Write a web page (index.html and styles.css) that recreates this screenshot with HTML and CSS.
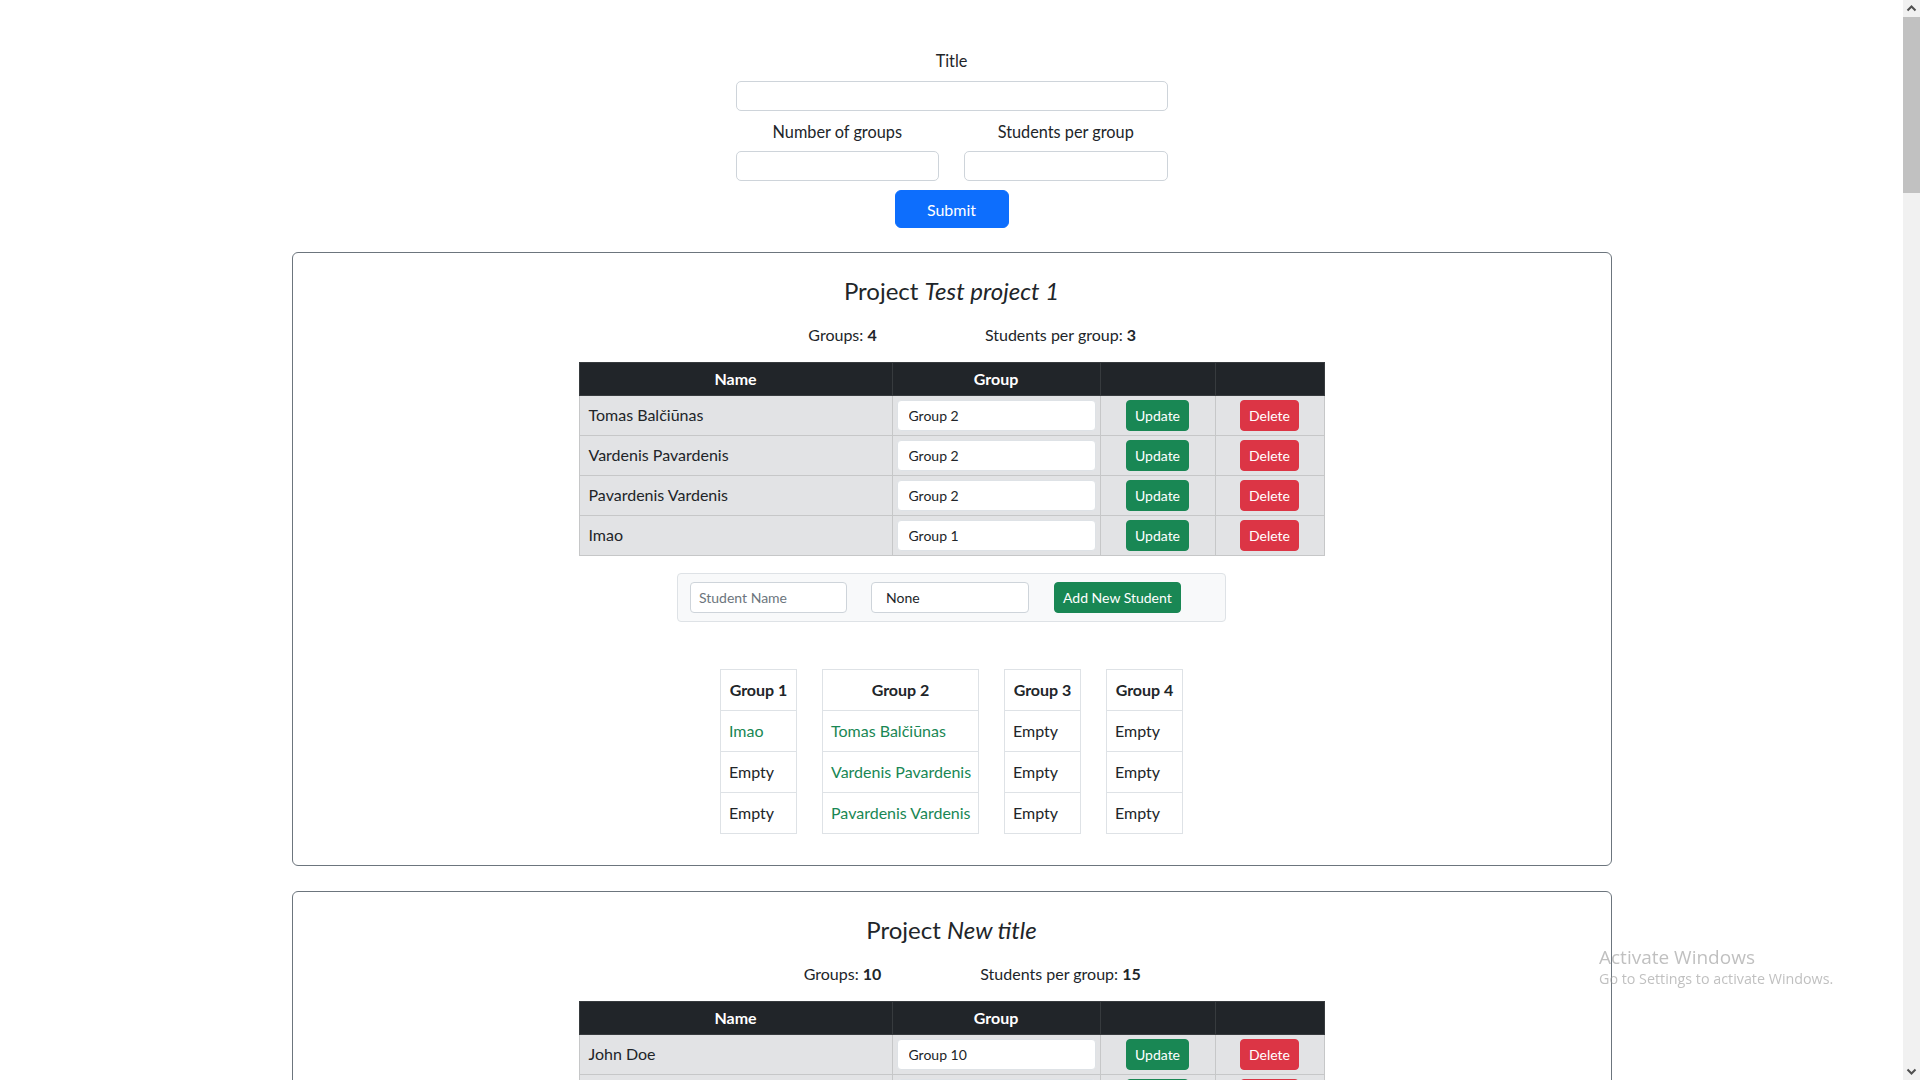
FILE: index.html
```html
<!DOCTYPE html>
<html lang="en">
<head>
<meta charset="utf-8">
<title>Projects</title>
<link rel="stylesheet" href="styles.css">
</head>
<body>
<div class="page">
  <main class="container">
    <form class="create-form">
      <label class="form-label">Title</label>
      <input class="form-input title-input" type="text">
      <div class="form-row">
        <div class="form-col">
          <label class="form-label row-label">Number of groups</label>
          <input class="form-input" type="text">
        </div>
        <div class="form-col">
          <label class="form-label row-label">Students per group</label>
          <input class="form-input" type="text">
        </div>
      </div>
      <button type="button" class="btn btn-primary btn-submit">Submit</button>
    </form>

    <section class="card">
      <h4 class="card-title">Project <em>Test project 1</em></h4>
      <div class="stats">
        <div class="stat">Groups: <b>4</b></div>
        <div class="stat">Students per group: <b>3</b></div>
      </div>
      <table class="students">
        <colgroup><col class="c-name"><col class="c-group"><col class="c-upd"><col class="c-del"></colgroup>
        <thead><tr><th>Name</th><th>Group</th><th></th><th></th></tr></thead>
        <tbody>
          <tr><td class="name">Tomas Balčiūnas</td><td><input class="cell-input" value="Group 2"></td><td class="act"><button class="btn btn-sm btn-success">Update</button></td><td class="act"><button class="btn btn-sm btn-danger">Delete</button></td></tr>
          <tr><td class="name">Vardenis Pavardenis</td><td><input class="cell-input" value="Group 2"></td><td class="act"><button class="btn btn-sm btn-success">Update</button></td><td class="act"><button class="btn btn-sm btn-danger">Delete</button></td></tr>
          <tr><td class="name">Pavardenis Vardenis</td><td><input class="cell-input" value="Group 2"></td><td class="act"><button class="btn btn-sm btn-success">Update</button></td><td class="act"><button class="btn btn-sm btn-danger">Delete</button></td></tr>
          <tr><td class="name">Imao</td><td><input class="cell-input" value="Group 1"></td><td class="act"><button class="btn btn-sm btn-success">Update</button></td><td class="act"><button class="btn btn-sm btn-danger">Delete</button></td></tr>
        </tbody>
      </table>
      <div class="add-box">
        <input class="cell-input add-name" placeholder="Student Name">
        <input class="cell-input add-group" value="None">
        <button class="btn btn-sm btn-success">Add New Student</button>
      </div>
      <div class="groups">
        <table class="gtable g-narrow">
          <tr><th>Group 1</th></tr>
          <tr><td class="member">Imao</td></tr>
          <tr><td>Empty</td></tr>
          <tr><td>Empty</td></tr>
        </table>
        <table class="gtable g-wide">
          <tr><th>Group 2</th></tr>
          <tr><td class="member">Tomas Balčiūnas</td></tr>
          <tr><td class="member">Vardenis Pavardenis</td></tr>
          <tr><td class="member">Pavardenis Vardenis</td></tr>
        </table>
        <table class="gtable g-narrow">
          <tr><th>Group 3</th></tr>
          <tr><td>Empty</td></tr>
          <tr><td>Empty</td></tr>
          <tr><td>Empty</td></tr>
        </table>
        <table class="gtable g-narrow">
          <tr><th>Group 4</th></tr>
          <tr><td>Empty</td></tr>
          <tr><td>Empty</td></tr>
          <tr><td>Empty</td></tr>
        </table>
      </div>
    </section>

    <section class="card">
      <h4 class="card-title">Project <em>New title</em></h4>
      <div class="stats">
        <div class="stat">Groups: <b>10</b></div>
        <div class="stat">Students per group: <b>15</b></div>
      </div>
      <table class="students">
        <colgroup><col class="c-name"><col class="c-group"><col class="c-upd"><col class="c-del"></colgroup>
        <thead><tr><th>Name</th><th>Group</th><th></th><th></th></tr></thead>
        <tbody>
          <tr><td class="name">John Doe</td><td><input class="cell-input" value="Group 10"></td><td class="act"><button class="btn btn-sm btn-success">Update</button></td><td class="act"><button class="btn btn-sm btn-danger">Delete</button></td></tr>
          <tr><td class="name">Jane Doe</td><td><input class="cell-input" value="Group 10"></td><td class="act"><button class="btn btn-sm btn-success">Update</button></td><td class="act"><button class="btn btn-sm btn-danger">Delete</button></td></tr>
        </tbody>
      </table>
    </section>
  </main>
</div>

<div class="scrollbar">
  <div class="sb-arrow">
    <svg width="17" height="17" viewBox="0 0 17 17"><path d="M4.5 10.5 L8.5 6.5 L12.5 10.5" fill="none" stroke="#505050" stroke-width="2"/></svg>
  </div>
  <div class="sb-thumb"></div>
  <div class="sb-track"></div>
  <div class="sb-arrow">
    <svg width="17" height="17" viewBox="0 0 17 17"><path d="M4.5 6.5 L8.5 10.5 L12.5 6.5" fill="none" stroke="#505050" stroke-width="2"/></svg>
  </div>
</div>

<div class="watermark">
  <div class="wm-title">Activate Windows</div>
  <div class="wm-sub">Go to Settings to activate Windows.</div>
</div>
</body>
</html>
```

FILE: styles.css
```css
html, body {
  margin: 0;
  padding: 0;
  height: 100%;
  overflow: hidden;
  background: #fff;
}

body {
  font-family: Lato, "Liberation Sans", sans-serif;
  font-size: 16px;
  line-height: 24px;
  color: #212529;
}

.page {
  width: calc(100% - 17px);
}

.container {
  width: 1320px;
  margin: 0 auto;
  padding-top: 49px;
}

/* ---------- create form ---------- */
.create-form {
  width: 432px;
  margin: 0 auto 24px;
  display: flex;
  flex-direction: column;
  align-items: center;
}

.form-label {
  display: block;
  text-align: center;
  margin-bottom: 8px;
  font-size: 16.3px;
}

.form-input {
  box-sizing: border-box;
  width: 100%;
  height: 30px;
  border: 1px solid #ced4da;
  border-radius: 5px;
  background: #fff;
  font: inherit;
  padding: 0 12px;
}

.title-input {
  margin-bottom: 9px;
}

.form-row {
  width: 100%;
  display: grid;
  grid-template-columns: 1fr 1fr;
  column-gap: 25px;
  margin-bottom: 9px;
}

.row-label {
  margin-bottom: 7px;
}

/* ---------- buttons ---------- */
.btn {
  font-family: inherit;
  border: 1px solid transparent;
  color: #fff;
  cursor: pointer;
}

.btn-primary {
  background: #0d6efd;
  border-color: #0d6efd;
}

.btn-submit {
  width: 114px;
  height: 38px;
  font-size: 16px;
  border-radius: 6px;
}

.btn-sm {
  height: 31px;
  font-size: 14px;
  line-height: 21px;
  padding: 4px 8px;
  border-radius: 4px;
}

.btn-success {
  background: #198754;
  border-color: #198754;
}

.btn-danger {
  background: #dc3545;
  border-color: #dc3545;
}

/* ---------- card ---------- */
.card {
  box-sizing: border-box;
  border: 1px solid #6c757d;
  border-radius: 6px;
  padding: 24px 24px 23px;
  margin-bottom: 25px;
}

.card-title {
  margin: 0 0 17px;
  text-align: center;
  font-size: 24px;
  line-height: 28.8px;
  font-weight: 400;
}

.card-title em {
  font-style: italic;
}

.stats {
  display: flex;
  justify-content: center;
  margin-bottom: 15px;
}

.stat {
  width: 218px;
  text-align: center;
}

/* ---------- students table ---------- */
.students {
  width: 745px;
  margin: 0 auto;
  border-collapse: collapse;
  table-layout: fixed;
}

.c-name { width: 313px; }
.c-group { width: 208px; }
.c-upd { width: 115px; }
.c-del { width: 109px; }

.students th {
  background: #212529;
  color: #fff;
  font-weight: 700;
  padding: 4px;
  border: 1px solid #373b3e;
  text-align: center;
}

.students td {
  background: #e2e3e5;
  border: 1px solid #c6c7c8;
  padding: 4px;
  vertical-align: middle;
}

.students td.name {
  padding-left: 9px;
}

.students td.act {
  text-align: center;
}

.cell-input {
  box-sizing: border-box;
  width: 100%;
  height: 31px;
  border: 1px solid #dee2e6;
  border-radius: 4px;
  background: #fff;
  font-family: inherit;
  font-size: 14px;
  color: #212529;
  padding: 0 11px;
  display: block;
}

.cell-input::placeholder {
  color: #6c757d;
}

/* ---------- add box ---------- */
.add-box {
  box-sizing: border-box;
  width: 549px;
  margin: 17px auto 0;
  padding: 8px 12px;
  display: flex;
  align-items: center;
  gap: 24px;
  background: #f8f9fa;
  border: 1px solid #dee2e6;
  border-radius: 4px;
}

.add-box .add-name {
  width: 157px;
  padding-left: 8px;
  border-color: #ced4da;
}

.add-box .add-group {
  width: 158px;
  padding-left: 14px;
  border-color: #ced4da;
}

.add-box .btn {
  margin-left: 1px;
}

/* ---------- group tables ---------- */
.groups {
  display: flex;
  justify-content: center;
  align-items: flex-start;
  gap: 25px;
  margin-top: 47px;
  margin-bottom: 8px;
}

.gtable {
  border-collapse: collapse;
  table-layout: fixed;
}

.g-narrow { width: 77px; }
.g-wide { width: 157px; }

.gtable th,
.gtable td {
  border: 1px solid #dee2e6;
  padding: 8px;
  white-space: nowrap;
}

.gtable th {
  font-weight: 700;
  text-align: center;
}

.gtable td {
  text-align: left;
}

.gtable td.member {
  color: #198754;
}

/* ---------- fake scrollbar ---------- */
.scrollbar {
  position: fixed;
  top: 0;
  right: 0;
  width: 17px;
  height: 100%;
  background: #f1f1f1;
  display: flex;
  flex-direction: column;
}

.sb-arrow {
  height: 17px;
  flex: none;
}

.sb-arrow svg {
  display: block;
}

.sb-thumb {
  height: 176px;
  flex: none;
  background: #c1c1c1;
}

.sb-track {
  flex: 1;
}

/* ---------- watermark ---------- */
.watermark {
  position: fixed;
  left: 1599px;
  top: 945px;
  color: rgba(150, 150, 150, 0.6);
  font-family: "Open Sans", "Noto Sans", sans-serif;
  pointer-events: none;
}

.wm-title {
  font-size: 19px;
  line-height: 24px;
}

.wm-sub {
  font-size: 14.3px;
  line-height: 20px;
}
```
